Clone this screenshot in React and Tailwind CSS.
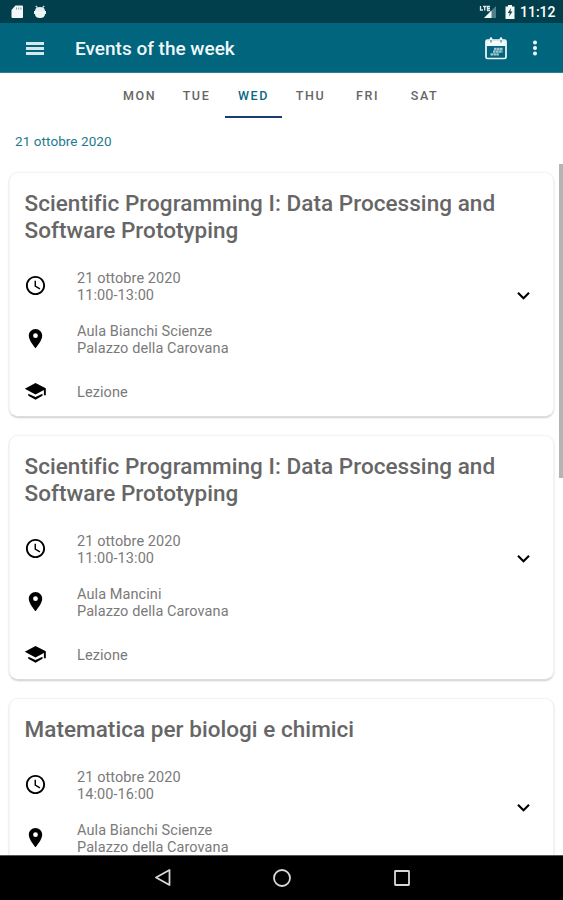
import React from "react";
import { MdAccessTime, MdPlace, MdExpandMore } from "react-icons/md";

const days = ["MON", "TUE", "WED", "THU", "FRI", "SAT"];

const events = [
  {
    title: ["Scientific Programming I: Data Processing and", "Software Prototyping"],
    time: "11:00-13:00",
    room: "Aula Bianchi Scienze",
  },
  {
    title: ["Scientific Programming I: Data Processing and", "Software Prototyping"],
    time: "11:00-13:00",
    room: "Aula Mancini",
  },
  {
    title: ["Matematica per biologi e chimici"],
    time: "14:00-16:00",
    room: "Aula Bianchi Scienze",
  },
];

function StatusBar() {
  return (
    <div className="flex h-[23px] shrink-0 items-center bg-[#023f4d] pl-[10px] pr-[8px] text-white">
      <svg className="h-[16px] w-[14px]" viewBox="0 0 14 16">
        <path d="M5.500 1.500H12q1 0 1 1V13q0 1-1 1H2.500q-1 0-1-1V6z" fill="#f4f8f8" />
        <path d="M6.500 3.500v2M8.700 3.500v2M10.900 3.500v2" stroke="#7f9ba2" strokeWidth="1" />
      </svg>
      <svg className="ml-[9px] h-[16px] w-[14px]" viewBox="0 0 14 16">
        <path d="M2.800 2l1.700 1.700M11.200 2L9.500 3.700" stroke="#e5eeee" strokeWidth="1.200" />
        <path d="M2 7q0-4 5-4t5 4z" fill="#e5eeee" />
        <path d="M1 7h12v3h-1q0 4-5 4t-5-4H1z" fill="#eef5f5" />
      </svg>
      <div className="flex-1" />
      <svg className="h-[16px] w-[18px]" viewBox="0 0 18 16">
        <path d="M17 2v12H5z" fill="#4f7f8a" />
        <path d="M12.500 6.500V14H5z" fill="#f4f8f8" />
        <path d="M1.500 2v4H4M4 2.500h3.500M5.700 2.500v4M11 2.500H8.500v4H11M8.500 4.500H11" stroke="#dbe7e9" strokeWidth="1.300" fill="none" />
      </svg>
      <svg className="ml-[7px] h-[16px] w-[12px]" viewBox="0 0 12 16">
        <path d="M4 1h4v1.500h2.500V15h-9V2.500H4z" fill="#f4f8f8" />
        <path d="M7 4L3.800 9h2L5 12.500 8.500 7.500h-2z" fill="#16424e" />
      </svg>
      <span className="ml-[4px] w-[35px] whitespace-nowrap text-[14px] font-medium leading-none">11:12</span>
    </div>
  );
}

function AppBar() {
  return (
    <header className="flex h-[50px] shrink-0 items-center border-b border-[#2f7d90] bg-[#00657d] pl-[26px] pr-[25px] pt-px">
      <div className="flex w-[18px] flex-col gap-[2px]">
        <span className="h-[3px] bg-[#d5e9ed]" />
        <span className="h-[3px] bg-[#d5e9ed]" />
        <span className="h-[3px] bg-[#d5e9ed]" />
      </div>
      <h1 className="ml-[31px] whitespace-nowrap pt-px text-[19px] font-medium leading-6 text-[#f1f8fa]">Events of the week</h1>
      <div className="flex-1" />
      <svg className="h-[24px] w-[22px]" viewBox="0 0 22 24" fill="none">
        <rect x="1" y="4" width="20" height="18.500" rx="1.500" stroke="#f4fafb" strokeWidth="1.700" />
        <path d="M1 4.500h20v5.500H1z" fill="#f4fafb" />
        <path d="M6 2.500v3M16 2.500v3" stroke="#f4fafb" strokeWidth="2.600" strokeLinecap="round" />
        <path d="M6 4v2.500M16 4v2.500" stroke="#00657d" strokeWidth="1" />
        <path d="M9 13h9M8 15.700h9.500M5.500 18.400h8.500" stroke="#a4c8d1" strokeWidth="2.300" strokeDasharray="2.500 .4" />
      </svg>
      <svg className="ml-[25px] h-[18px] w-[6px]" viewBox="0 0 6 18" fill="#f4fafb">
        <circle cx="3" cy="3.500" r="2" />
        <circle cx="3" cy="9" r="2" />
        <circle cx="3" cy="14.500" r="2" />
      </svg>
    </header>
  );
}

function DayTabs() {
  return (
    <nav className="flex h-[45px] shrink-0 justify-center text-[12.500px] font-medium tracking-[1.600px]">
      {days.map((day) => (
        <div
          key={day}
          className={
            day === "WED"
              ? "flex w-[57px] items-center justify-center border-b-2 border-[#153d70] pl-[1px] pt-[4px] text-[#0b6783]"
              : "flex w-[57px] items-center justify-center border-b-2 border-transparent pl-[1px] pt-[4px] text-[#666666]"
          }
        >
          {day}
        </div>
      ))}
    </nav>
  );
}

function GraduationCap({ className }) {
  return (
    <svg className={className} viewBox="0 0 23 23">
      <path d="M.8 8.800L11.500 3l10.300 5.300v7h-1.900V9.900l-8.400 4.600z" fill="currentColor" />
      <path d="M4.300 13.800v2l7.200 4 7-4v-2l-7 3.300z" fill="currentColor" />
    </svg>
  );
}

function Detail({ icon: Icon, lines, className, iconClass }) {
  return (
    <div className={"flex items-start " + className}>
      <Icon className={"size-[23px] shrink-0 text-black " + iconClass} />
      <div className="ml-[30px] text-[14.500px] leading-[17px] tracking-[0.080px] text-[#7a7a7a]">
        {lines.map((line) => (
          <p key={line} className="whitespace-nowrap">{line}</p>
        ))}
      </div>
    </div>
  );
}

function EventCard({ event }) {
  return (
    <article className="flex shrink-0 items-center rounded-[9px] border border-[#f3f3f3] border-b-[#dddddd] bg-white pb-[14px] pl-[14px] pr-[17px] pt-[17px] shadow-[0_1px_2px_rgba(0,0,0,0.2)]">
      <div className="flex-1">
        <h2 className="w-0 whitespace-nowrap pl-[0.500px] text-[22.500px] font-medium leading-[27px] tracking-[0.045px] text-[#666666]">
          {event.title.map((line) => (
            <span key={line} className="block">{line}</span>
          ))}
        </h2>
        <Detail icon={MdAccessTime} lines={["21 ottobre 2020", event.time]} className="mt-[26px]" iconClass="mt-[4px]" />
        <Detail icon={MdPlace} lines={[event.room, "Palazzo della Carovana"]} className="mt-[19px]" iconClass="mt-[4px]" />
        <Detail icon={GraduationCap} lines={["Lezione"]} className="mt-[27px] h-[18px]" iconClass="-mt-[4px]" />
      </div>
      <MdExpandMore className="-mt-[2px] size-[25px] shrink-0 text-black" />
    </article>
  );
}

function NavigationBar() {
  return (
    <footer className="flex h-[45px] shrink-0 items-center justify-between border-t border-[#555555] bg-black pl-[152px] pr-[151px]">
      <svg className="size-[20px]" viewBox="0 0 20 20" fill="none" stroke="#d8d8d8" strokeWidth="1.800">
        <path d="M17.500 2v15L4 9.500z" strokeLinejoin="round" />
      </svg>
      <svg className="size-[20px]" viewBox="0 0 20 20" fill="none" stroke="#d8d8d8" strokeWidth="1.800">
        <circle cx="10" cy="10" r="8" />
      </svg>
      <svg className="size-[20px]" viewBox="0 0 20 20" fill="none" stroke="#d8d8d8" strokeWidth="1.800">
        <rect x="3" y="3" width="14" height="14" rx=".5" />
      </svg>
    </footer>
  );
}

export default function App() {
  return (
    <div className="flex h-[900px] w-[563px] flex-col overflow-hidden bg-white font-['Roboto',sans-serif]">
      <StatusBar />
      <AppBar />
      <DayTabs />
      <p className="flex h-[46px] shrink-0 items-center pl-[15px] pt-[2px] text-[13.500px] leading-none tracking-[0.080px] text-[#237a8c]">21 ottobre 2020</p>
      <main className="flex min-h-0 flex-1 overflow-hidden">
        <div className="flex w-[554px] shrink-0 flex-col gap-[18px] pl-[9px] pt-[8px]">
          {events.map((event, i) => (
            <EventCard key={i} event={event} />
          ))}
        </div>
        <div className="ml-[5px] h-[314px] w-[4px] bg-[#b4b4b4]" />
      </main>
      <NavigationBar />
    </div>
  );
}
